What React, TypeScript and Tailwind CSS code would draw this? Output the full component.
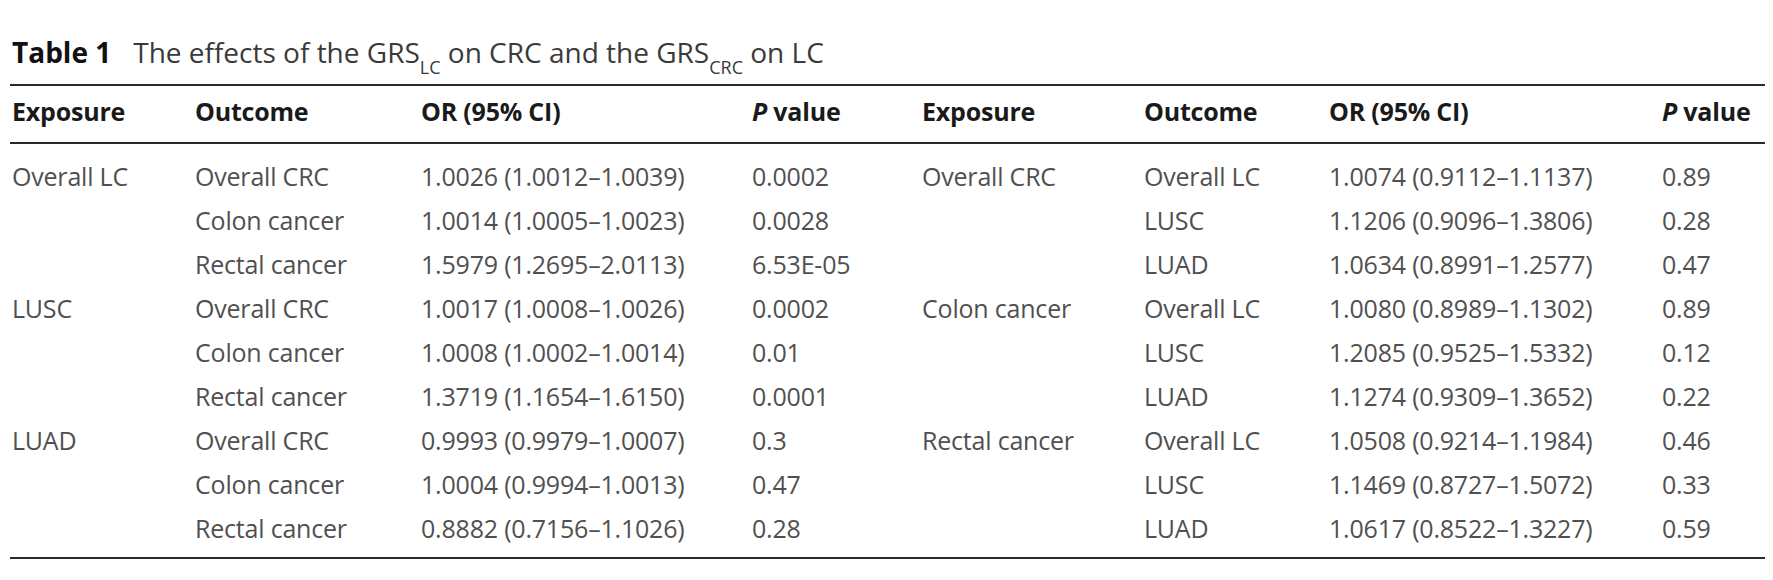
const rows = [
  ['Overall LC', 'Overall CRC', '1.0026 (1.0012–1.0039)', '0.0002', 'Overall CRC', 'Overall LC', '1.0074 (0.9112–1.1137)', '0.89'],
  ['', 'Colon cancer', '1.0014 (1.0005–1.0023)', '0.0028', '', 'LUSC', '1.1206 (0.9096–1.3806)', '0.28'],
  ['', 'Rectal cancer', '1.5979 (1.2695–2.0113)', '6.53E-05', '', 'LUAD', '1.0634 (0.8991–1.2577)', '0.47'],
  ['LUSC', 'Overall CRC', '1.0017 (1.0008–1.0026)', '0.0002', 'Colon cancer', 'Overall LC', '1.0080 (0.8989–1.1302)', '0.89'],
  ['', 'Colon cancer', '1.0008 (1.0002–1.0014)', '0.01', '', 'LUSC', '1.2085 (0.9525–1.5332)', '0.12'],
  ['', 'Rectal cancer', '1.3719 (1.1654–1.6150)', '0.0001', '', 'LUAD', '1.1274 (0.9309–1.3652)', '0.22'],
  ['LUAD', 'Overall CRC', '0.9993 (0.9979–1.0007)', '0.3', 'Rectal cancer', 'Overall LC', '1.0508 (0.9214–1.1984)', '0.46'],
  ['', 'Colon cancer', '1.0004 (0.9994–1.0013)', '0.47', '', 'LUSC', '1.1469 (0.8727–1.5072)', '0.33'],
  ['', 'Rectal cancer', '0.8882 (0.7156–1.1026)', '0.28', '', 'LUAD', '1.0617 (0.8522–1.3227)', '0.59'],
];

const cols = 'grid grid-cols-[183px_226px_331px_170px_222px_185px_333px_103px]';

function PValue() {
  return (
    <span>
      <i>P</i> value
    </span>
  );
}

export default function App() {
  return (
    <div className="min-h-screen bg-white font-['Open_Sans',sans-serif] pt-[34px] pl-[10px] pr-[8px]">
      {/* caption */}
      <div className="h-[36px] flex items-center pl-[2px] text-[28px] text-[#3a3a3a] leading-none">
        <span className="font-bold text-[#111] mr-[22px]">Table 1</span>
        <span>
          The effects of the GRS<sub className="text-[18px] align-[-6px]">LC</sub> on CRC and the GRS
          <sub className="text-[18px] align-[-6px]">CRC</sub> on LC
        </span>
      </div>

      <div className="mt-[14px] border-t-2 border-b-2 border-[#2a2a2a]">
        <div className={`${cols} h-[56px] items-center pl-[2px] pb-[4px] text-[25px] font-bold text-[#1a1a1a] tracking-[-0.2px]`}>
          <div>Exposure</div>
          <div>Outcome</div>
          <div>OR (95% CI)</div>
          <PValue />
          <div>Exposure</div>
          <div>Outcome</div>
          <div>OR (95% CI)</div>
          <PValue />
        </div>
      </div>

      <div className="pt-[11px] pb-[6px] border-b-2 border-[#2a2a2a]">
        {rows.map((r, i) => (
          <div key={i} className={`${cols} h-[44px] items-center pl-[2px] text-[25px] text-[#505050] tracking-[-0.2px]`}>
            {r.map((c, j) => (
              <div key={j}>{c}</div>
            ))}
          </div>
        ))}
      </div>
    </div>
  );
}
